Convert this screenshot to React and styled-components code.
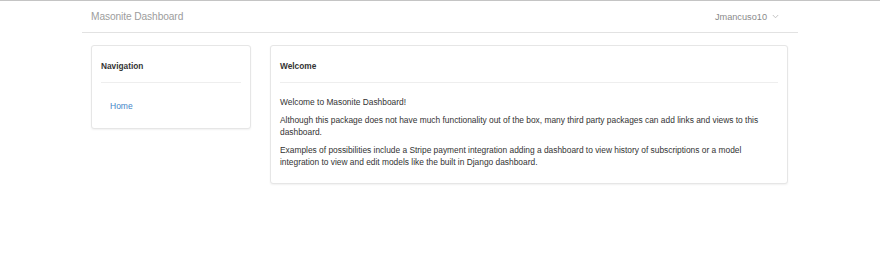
import React from "react";
import styled, { createGlobalStyle } from "styled-components";

const GlobalStyle = createGlobalStyle`
  html, body {
    margin: 0;
    padding: 0;
    background: #ffffff;
    font-family: "Liberation Sans", Arial, sans-serif;
    color: #333333;
  }
`;

const Page = styled.div`
  border-top: 1px solid #c4c4c4;
  min-height: 260px;
`;

const Container = styled.div`
  width: 716px;
  margin: 0 auto;
`;

const Navbar = styled.nav`
  display: flex;
  align-items: center;
  justify-content: space-between;
  height: 31px;
  padding: 0 19px 0 9px;
  border-bottom: 1px solid #e2e2e2;
`;

const Brand = styled.a`
  font-size: 10.2px;
  color: #9d9d9d;
  text-decoration: none;
  letter-spacing: -0.1px;
`;

const UserMenu = styled.div`
  display: flex;
  align-items: center;
  gap: 5px;
  font-size: 9.2px;
  color: #8a8a8a;
`;

const Layout = styled.div`
  display: grid;
  grid-template-columns: 160px 518px;
  column-gap: 19px;
  align-items: start;
  padding: 12px 9px 0;
`;

const Card = styled.section`
  border: 1px solid #e6e6e6;
  border-radius: 3px;
  box-shadow: 0 1px 2px rgba(0, 0, 0, 0.06);
  padding: 0 9px;
  background: #fff;
`;

const CardTitle = styled.h3`
  margin: 0;
  padding: 14px 0 10px;
  font-size: 8.3px;
  line-height: 12px;
  font-weight: bold;
  color: #333;
  border-bottom: 1px solid #eeeeee;
`;

const CardBody = styled.div`
  padding: ${(p) => p.$padding};
`;

const NavList = styled.ul`
  list-style: none;
  margin: 0;
  padding: 0;
`;

const NavLink = styled.a`
  display: block;
  padding: 4px 9px;
  font-size: 8.5px;
  line-height: 12px;
  color: #3f86c8;
  text-decoration: none;
`;

const Text = styled.p`
  margin: 0 0 6px;
  font-size: 8.4px;
  line-height: 12px;
  color: #333;
`;

const Chevron = () => (
  <svg width="7" height="5" viewBox="0 0 7 5" fill="none">
    <path d="M0.8 1 L3.5 3.8 L6.2 1" stroke="#b5b5b5" strokeWidth="0.8" />
  </svg>
);

export default function App() {
  return (
    <Page>
      <GlobalStyle />
      <Container>
        <Navbar>
          <Brand href="#">Masonite Dashboard</Brand>
          <UserMenu>
            <span>Jmancuso10</span>
            <Chevron />
          </UserMenu>
        </Navbar>
        <Layout>
          <Card>
            <CardTitle>Navigation</CardTitle>
            <CardBody $padding="13px 0 12px">
              <NavList>
                <li>
                  <NavLink href="#">Home</NavLink>
                </li>
              </NavList>
            </CardBody>
          </Card>
          <Card>
            <CardTitle>Welcome</CardTitle>
            <CardBody $padding="13px 0 9px">
              <Text>Welcome to Masonite Dashboard!</Text>
              <Text>
                Although this package does not have much functionality out of
                the box, many third party packages can add links and views to
                this dashboard.
              </Text>
              <Text>
                Examples of possibilities include a Stripe payment integration
                adding a dashboard to view history of subscriptions or a model
                integration to view and edit models like the built in Django
                dashboard.
              </Text>
            </CardBody>
          </Card>
        </Layout>
      </Container>
    </Page>
  );
}
